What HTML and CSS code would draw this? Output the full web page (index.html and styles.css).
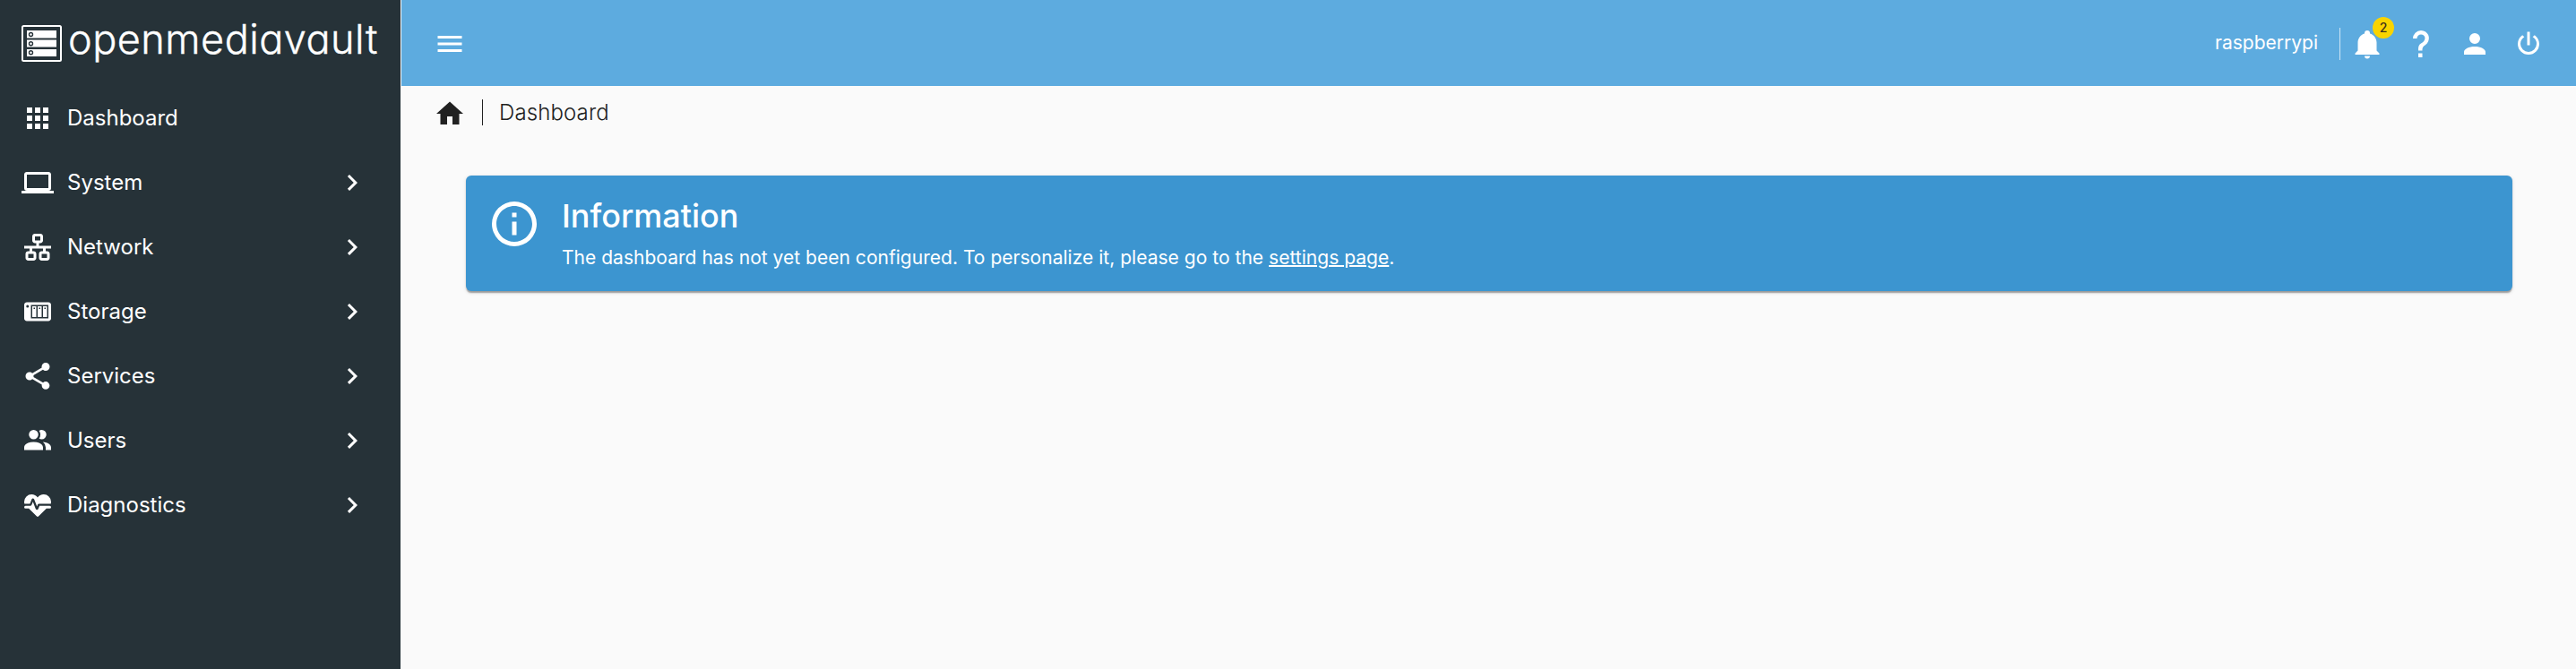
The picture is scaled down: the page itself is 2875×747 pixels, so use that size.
FILE: index.html
```
<!DOCTYPE html>
<html lang="en">
<head>
<meta charset="utf-8">
<title>openmediavault</title>
<link rel="stylesheet" href="styles.css">
</head>
<body>
<div class="app">
  <aside class="sidebar">
    <div class="brand">
      <svg class="brand-mark" viewBox="0 0 45 41">
        <rect x="1" y="1" width="43" height="39" rx="1.5" fill="none" stroke="#fff" stroke-width="2"/>
        <path fill="#fff" d="M6 6h33v8.500H6zM6 16.500h33v8H6zM6 27h33v8H6z"/>
        <g fill="#fff" stroke="#263238" stroke-width="1.4"><circle cx="10.500" cy="10.500" r="2"/><circle cx="10.500" cy="20.700" r="2"/><circle cx="10.500" cy="30.700" r="2"/></g>
      </svg>
      <span class="brand-name">openmediavault</span>
    </div>
    <nav class="nav">
      <a class="nav-item"><svg class="icon" viewBox="0 0 24 24"><path d="M16 20h4v-4h-4m0-2h4v-4h-4m-6-2h4V4h-4m6 4h4V4h-4m-6 10h4v-4h-4m-6 4h4v-4H4m0 10h4v-4H4m6 4h4v-4h-4M4 8h4V4H4v4Z"/></svg><span class="nav-label">Dashboard</span></a>
      <a class="nav-item"><svg class="icon" viewBox="0 0 24 24"><path d="M4 6h16v10H4m16 2a2 2 0 0 0 2-2V6c0-1.110-.9-2-2-2H4c-1.110 0-2 .89-2 2v10a2 2 0 0 0 2 2H0v2h24v-2h-4Z"/></svg><span class="nav-label">System</span><svg class="icon" viewBox="0 0 24 24"><path d="M8.590 16.580 13.170 12 8.590 7.410 10 6l6 6-6 6-1.410-1.420Z"/></svg></a>
      <a class="nav-item"><svg class="icon" viewBox="0 0 24 24"><path d="M10 2C8.890 2 8 2.890 8 4v3c0 1.110.89 2 2 2h1v2H2v2h4v2H5c-1.110 0-2 .89-2 2v3c0 1.110.89 2 2 2h4c1.110 0 2-.89 2-2v-3c0-1.110-.89-2-2-2H8v-2h8v2h-1c-1.110 0-2 .89-2 2v3c0 1.110.89 2 2 2h4c1.110 0 2-.89 2-2v-3c0-1.110-.89-2-2-2h-1v-2h4v-2h-9V9h1c1.110 0 2-.89 2-2V4c0-1.110-.89-2-2-2h-4m0 2h4v3h-4V4M5 17h4v3H5v-3m10 0h4v3h-4v-3Z"/></svg><span class="nav-label">Network</span><svg class="icon" viewBox="0 0 24 24"><path d="M8.590 16.580 13.170 12 8.590 7.410 10 6l6 6-6 6-1.410-1.420Z"/></svg></a>
      <a class="nav-item"><svg class="icon" viewBox="0 0 24 24"><path d="M4 5c-1.110 0-2 .89-2 2v10c0 1.110.89 2 2 2h16c1.110 0 2-.89 2-2V7c0-1.110-.89-2-2-2H4m.5 2a1 1 0 0 1 1 1 1 1 0 0 1-1 1 1 1 0 0 1-1-1 1 1 0 0 1 1-1M7 7h13v10H7V7m1 1v8h3V8H8m4 0v8h3V8h-3m4 0v8h3V8h-3M9 9h1v1H9V9m4 0h1v1h-1V9m4 0h1v1h-1V9Z"/></svg><span class="nav-label">Storage</span><svg class="icon" viewBox="0 0 24 24"><path d="M8.590 16.580 13.170 12 8.590 7.410 10 6l6 6-6 6-1.410-1.420Z"/></svg></a>
      <a class="nav-item"><svg class="icon" viewBox="0 0 24 24"><path d="M18 16.080c-.76 0-1.440.3-1.960.77L8.910 12.700c.05-.23.09-.46.09-.7s-.04-.47-.09-.7l7.050-4.110c.54.5 1.250.81 2.040.81a3 3 0 0 0 3-3 3 3 0 0 0-3-3 3 3 0 0 0-3 3c0 .24.04.47.09.7L8.040 9.810C7.500 9.310 6.790 9 6 9a3 3 0 0 0-3 3 3 3 0 0 0 3 3c.79 0 1.500-.31 2.040-.81l7.120 4.150c-.05.21-.08.43-.08.66 0 1.610 1.310 2.910 2.920 2.910s2.920-1.300 2.920-2.910A2.920 2.920 0 0 0 18 16.080Z"/></svg><span class="nav-label">Services</span><svg class="icon" viewBox="0 0 24 24"><path d="M8.590 16.580 13.170 12 8.590 7.410 10 6l6 6-6 6-1.410-1.420Z"/></svg></a>
      <a class="nav-item"><svg class="icon" viewBox="0 0 24 24"><path d="M16 17v2H2v-2s0-4 7-4 7 4 7 4m-3.500-9.500A3.500 3.500 0 1 0 9 11a3.500 3.500 0 0 0 3.500-3.500m3.440 5.500A5.320 5.320 0 0 1 18 17v2h4v-2s0-3.630-6.060-4M15 4a3.390 3.390 0 0 0-1.930.59 5 5 0 0 1 0 5.820A3.390 3.390 0 0 0 15 11a3.500 3.500 0 0 0 0-7Z"/></svg><span class="nav-label">Users</span><svg class="icon" viewBox="0 0 24 24"><path d="M8.590 16.580 13.170 12 8.590 7.410 10 6l6 6-6 6-1.410-1.420Z"/></svg></a>
      <a class="nav-item"><svg class="icon" viewBox="0 0 24 24"><path d="M7.500 4A5.500 5.500 0 0 0 2 9.500c0 .5.090 1 .22 1.500H6.300l1.270-3.370c.3-.8 1.480-.88 1.860 0L11.500 13l.59-1.420c.13-.33.480-.58.910-.58h8.780c.13-.5.220-1 .22-1.500A5.500 5.500 0 0 0 16.500 4c-1.860 0-3.500.93-4.500 2.340C11 4.930 9.360 4 7.500 4M3 12.500a1 1 0 0 0-1 1 1 1 0 0 0 1 1h2.440L11 20c1 .9 1 .9 2 0l5.560-5.500H21a1 1 0 0 0 1-1 1 1 0 0 0-1-1h-7.600l-.93 2.300c-.4 1.010-1.550.87-1.920.03L8.500 9.500l-.96 2.330c-.15.380-.49.670-.94.670H3Z"/></svg><span class="nav-label">Diagnostics</span><svg class="icon" viewBox="0 0 24 24"><path d="M8.590 16.580 13.170 12 8.590 7.410 10 6l6 6-6 6-1.410-1.420Z"/></svg></a>
    </nav>
  </aside>
  <div class="content">
    <header class="topbar">
      <svg class="icon" viewBox="0 0 24 24"><path d="M3 6h18v2H3V6m0 5h18v2H3v-2m0 5h18v2H3v-2Z"/></svg>
      <span class="hostname">raspberrypi</span>
      <div class="actions">
        <button class="action"><svg class="icon" viewBox="0 0 24 24"><path d="M21 19v1H3v-1l2-2v-6c0-3.100 2.030-5.830 5-6.710V4a2 2 0 0 1 4 0v.29c2.970.88 5 3.610 5 6.710v6l2 2m-7 2a2 2 0 0 1-4 0"/></svg><span class="badge">2</span></button>
        <button class="action"><svg class="icon" viewBox="0 0 24 24"><path d="M10 19h3v3h-3v-3m2-17c5.350.22 7.680 5.620 4.500 9.670-.83 1-2.170 1.660-2.830 2.500C13 15 13 16 13 17h-3c0-1.670 0-3.080.67-4.080.66-1 2-1.590 2.830-2.250C15.920 8.430 15.320 5.260 12 5a3 3 0 0 0-3 3H6a6 6 0 0 1 6-6Z"/></svg></button>
        <button class="action"><svg class="icon" viewBox="0 0 24 24"><path d="M12 4a4 4 0 1 1 0 8 4 4 0 0 1 0-8m0 10c4.420 0 8 1.790 8 4v2H4v-2c0-2.210 3.580-4 8-4Z"/></svg></button>
        <button class="action"><svg class="icon" viewBox="0 0 24 24"><path d="m16.560 5.440-1.450 1.450A5.970 5.970 0 0 1 18 12a6 6 0 0 1-12 0c0-2.170 1.160-4.060 2.880-5.120L7.440 5.440A7.960 7.960 0 0 0 4 12a8 8 0 0 0 16 0c0-2.720-1.360-5.120-3.440-6.560M13 3h-2v10h2"/></svg></button>
      </div>
    </header>
    <div class="breadcrumb">
      <svg class="icon home" viewBox="0 0 24 24"><path d="M10 20v-6h4v6h5v-8h3L12 3 2 12h3v8h5Z"/></svg>
      <span class="crumb">Dashboard</span>
    </div>
    <main class="page">
      <section class="alert">
        <svg class="alert-icon" viewBox="0 0 24 24"><path d="M11 9h2V7h-2m1 13c-4.410 0-8-3.590-8-8s3.590-8 8-8 8 3.590 8 8-3.590 8-8 8m0-18a10 10 0 1 0 0 20 10 10 0 0 0 0-20m-1 15h2v-6h-2v6Z"/></svg>
        <div class="alert-body">
          <h1 class="alert-title">Information</h1>
          <p class="alert-text">The dashboard has not yet been configured. To personalize it, please go to the <a class="alert-link">settings page</a>.</p>
        </div>
      </section>
    </main>
  </div>
</div>
</body>
</html>
```
FILE: styles.css
```
* { box-sizing: border-box; }
body { margin: 0; background: #fafafa; color: #212121; font-family: Inter, "Liberation Sans", sans-serif; }
.app { display: flex; height: 747px; overflow: hidden; }
.icon { display: block; width: 36px; height: 36px; flex: none; fill: currentColor; }

.sidebar { width: 448px; flex: none; background: #263238; background-clip: padding-box; border-right: 1px solid #fafafa; color: #fff; }
.brand { display: flex; align-items: flex-start; height: 96px; padding: 28px 0 0 24px; }
.brand-mark { width: 45px; height: 41px; flex: none; }
.brand-name { margin: -11px 0 0 7px; font-size: 45px; font-weight: 300; line-height: 54px; letter-spacing: .5px; font-feature-settings: "cv11"; white-space: nowrap; -webkit-text-stroke: .4px #fff; }
.nav { display: flex; flex-direction: column; }
.nav-item { display: flex; align-items: center; height: 72px; padding: 0 36px 0 24px; }
.nav-label { flex: 1; margin-left: 15px; font-size: 24px; line-height: 36px; }

.content { flex: 1; min-width: 0; display: flex; flex-direction: column; }
.topbar { display: flex; align-items: center; height: 96px; flex: none; padding: 2px 23px 0 36px; background: #5dabdf; color: #fff; }
.hostname { margin-left: auto; margin-right: 24px; font-size: 21px; line-height: 30px; position: relative; top: -1px; }
.actions { display: flex; align-items: center; height: 36px; border-left: 1px solid rgba(255, 255, 255, .7); }
.action { position: relative; display: flex; justify-content: center; width: 60px; padding: 0; border: 0; background: none; color: inherit; }
.badge { position: absolute; left: 36px; top: -12px; width: 24px; height: 24px; border-radius: 50%; background: #fad400; color: #3c2f1c; font: 500 14px/24px Inter, sans-serif; text-align: center; }

.breadcrumb { display: flex; align-items: center; height: 59px; padding: 0 36px; }
.home { margin-top: 2px; }
.crumb { margin-left: 18px; padding-left: 18px; border-left: 1px solid #212121; font-size: 24px; font-weight: 300; line-height: 29px; letter-spacing: .12px; }

.page { padding: 41px 71px 0 72px; }
.alert { display: flex; height: 129px; padding: 24px; border-radius: 6px; background: #3c95d0; color: #fff; box-shadow: 0 3px 1.500px -1.500px rgba(0, 0, 0, .2), 0 1.500px 1.500px rgba(0, 0, 0, .14), 0 1.500px 4.500px rgba(0, 0, 0, .12); }
.alert-icon { width: 60px; height: 60px; flex: none; fill: currentColor; }
.alert-body { margin-left: 23px; }
.alert-title { margin: 0; font-size: 36px; font-weight: 500; line-height: 43px; }
.alert-text { margin: 10px 0 0; font-size: 21px; line-height: 30px; letter-spacing: .025px; }
.alert-link { text-decoration: underline; text-decoration-thickness: 2px; }
```
